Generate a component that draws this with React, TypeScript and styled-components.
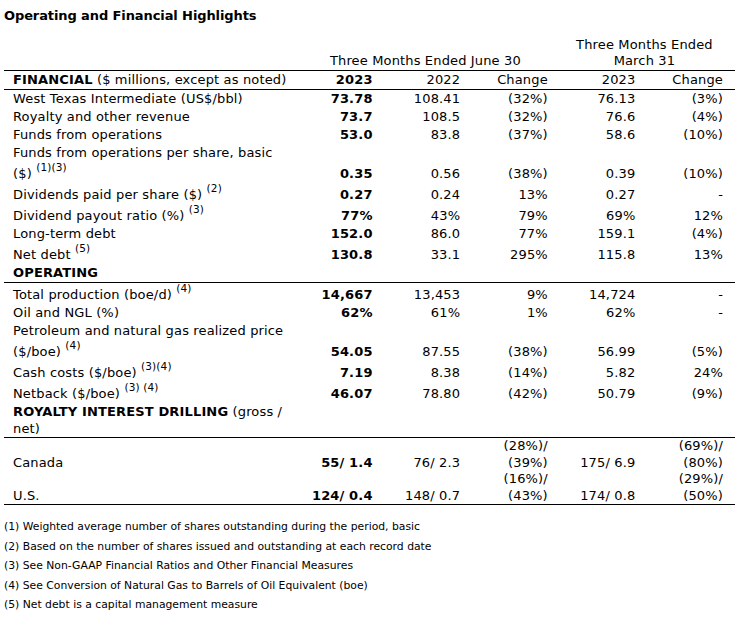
import React from "react";
import styled, {createGlobalStyle} from "styled-components";

const GlobalStyle = createGlobalStyle`
  body {
    margin: 0;
    background: #ffffff;
    color: #000000;
    font-family: "DejaVu Sans", Verdana, sans-serif;
  }
`;

const Page = styled('div')`
  padding: 7px 3px 0 4px;
  font-size: 13px;
  line-height: 18px;
  letter-spacing: 0.15px;
`;

const Title = styled('h1')`
  margin: 0 0 12px 0;
  font-size: 13px;
  line-height: 18px;
  font-weight: bold;
  letter-spacing: -0.1px;
`;

const Table = styled('table')`
  width: 731px;
  table-layout: fixed;
  border-collapse: collapse;
`;

const LabelCol = styled('col')`
  width: 293px;
`;
const NumCol = styled('col')`
  width: 87.6px;
`;

const Row = styled('tr')<{ $rule?: boolean }>`
  border-bottom: ${p => p.$rule ? '1px solid #000' : 'none'};
`;

// $lh lets the drilling block sit a little tighter than the rest
const Label = styled('td')<{ $lh?: number }>`
  padding: 0 0 0 9px;
  text-align: left;
  vertical-align: bottom;
  white-space: nowrap;
  line-height: ${p => p.$lh ?? 18}px;
`;

const Cell = styled('td')<{ $bold?: boolean; $lh?: number }>`
  padding: 0 12px 0 0;
  text-align: right;
  vertical-align: bottom;
  white-space: nowrap;
  font-weight: ${p => p.$bold ? 'bold' : 'normal'};
  line-height: ${p => p.$lh ?? 18}px;
`;

const GroupHead = styled('th')`
  padding: 0 12px 1px 6px;
  text-align: center;
  vertical-align: bottom;
  font-weight: normal;
  line-height: 16px;
`;

const Section = styled('b')`
  font-weight: bold;
`;

const Sup = styled('sup')`
  font-size: 10.5px;
  line-height: 10px;
  vertical-align: 7px;
`;

const Notes = styled('div')`
  margin-top: 15px;
  font-size: 10.8px;
  line-height: 13px;
  letter-spacing: 0;
`;

const Note = styled('p')`
  margin: 0 0 6.5px 0;
`;

type Line = {
  label: React.ReactNode;
  values: React.ReactNode[];
};

const financial: Line[] = [
  {label: 'West Texas Intermediate (US$/bbl)', values: ['73.78', '108.41', '(32%)', '76.13', '(3%)']},
  {label: 'Royalty and other revenue', values: ['73.7', '108.5', '(32%)', '76.6', '(4%)']},
  {label: 'Funds from operations', values: ['53.0', '83.8', '(37%)', '58.6', '(10%)']},
  {
    label: <>Funds from operations per share, basic<br/>($) <Sup>(1)(3)</Sup></>,
    values: ['0.35', '0.56', '(38%)', '0.39', '(10%)']
  },
  {label: <>Dividends paid per share ($) <Sup>(2)</Sup></>, values: ['0.27', '0.24', '13%', '0.27', '-']},
  {label: <>Dividend payout ratio (%) <Sup>(3)</Sup></>, values: ['77%', '43%', '79%', '69%', '12%']},
  {label: 'Long-term debt', values: ['152.0', '86.0', '77%', '159.1', '(4%)']},
  {label: <>Net debt <Sup>(5)</Sup></>, values: ['130.8', '33.1', '295%', '115.8', '13%']},
];

const operating: Line[] = [
  {label: <>Total production (boe/d) <Sup>(4)</Sup></>, values: ['14,667', '13,453', '9%', '14,724', '-']},
  {label: 'Oil and NGL (%)', values: ['62%', '61%', '1%', '62%', '-']},
  {
    label: <>Petroleum and natural gas realized price<br/>($/boe) <Sup>(4)</Sup></>,
    values: ['54.05', '87.55', '(38%)', '56.99', '(5%)']
  },
  {label: <>Cash costs ($/boe) <Sup>(3)(4)</Sup></>, values: ['7.19', '8.38', '(14%)', '5.82', '24%']},
  {label: <>Netback ($/boe) <Sup>(3) (4)</Sup></>, values: ['46.07', '78.80', '(42%)', '50.79', '(9%)']},
];

const drilling: Line[] = [
  {label: 'Canada', values: ['55/ 1.4', '76/ 2.3', <>(28%)/<br/>(39%)</>, '175/ 6.9', <>(69%)/<br/>(80%)</>]},
  {label: 'U.S.', values: ['124/ 0.4', '148/ 0.7', <>(16%)/<br/>(43%)</>, '174/ 0.8', <>(29%)/<br/>(50%)</>]},
];

const notes = [
  '(1) Weighted average number of shares outstanding during the period, basic',
  '(2) Based on the number of shares issued and outstanding at each record date',
  '(3) See Non-GAAP Financial Ratios and Other Financial Measures',
  '(4) See Conversion of Natural Gas to Barrels of Oil Equivalent (boe)',
  '(5) Net debt is a capital management measure',
];

const renderLines = (lines: Line[], lh?: number) =>
  lines.map((line, index) => (
    <Row key={index} $rule={lh !== undefined && index === lines.length - 1}>
      <Label $lh={lh}>{line.label}</Label>
      {line.values.map((value, i) => (
        <Cell key={i} $bold={i === 0} $lh={lh}>{value}</Cell>
      ))}
    </Row>
  ));

export default function App() {
  return <Page>
    <GlobalStyle/>
    <Title>Operating and Financial Highlights</Title>
    <Table>
      <colgroup>
        <LabelCol/>
        <NumCol/>
        <NumCol/>
        <NumCol/>
        <NumCol/>
        <NumCol/>
      </colgroup>
      <thead>
        <Row $rule>
          <GroupHead/>
          <GroupHead colSpan={3}>Three Months Ended June 30</GroupHead>
          <GroupHead colSpan={2}>Three Months Ended<br/>March 31</GroupHead>
        </Row>
      </thead>
      <tbody>
        <Row $rule>
          <Label><Section>FINANCIAL</Section> ($ millions, except as noted)</Label>
          <Cell $bold>2023</Cell>
          <Cell>2022</Cell>
          <Cell>Change</Cell>
          <Cell>2023</Cell>
          <Cell>Change</Cell>
        </Row>
        {renderLines(financial)}
        <Row $rule>
          <Label><Section>OPERATING</Section></Label>
          <Cell/><Cell/><Cell/><Cell/><Cell/>
        </Row>
        {renderLines(operating)}
        <Row $rule>
          <Label $lh={17}><Section>ROYALTY INTEREST DRILLING</Section> (gross /<br/>net)</Label>
          <Cell $lh={17}/><Cell $lh={17}/><Cell $lh={17}/><Cell $lh={17}/><Cell $lh={17}/>
        </Row>
        {renderLines(drilling, 16.5)}
      </tbody>
    </Table>
    <Notes>
      {notes.map((note, index) => <Note key={index}>{note}</Note>)}
    </Notes>
  </Page>;
}
